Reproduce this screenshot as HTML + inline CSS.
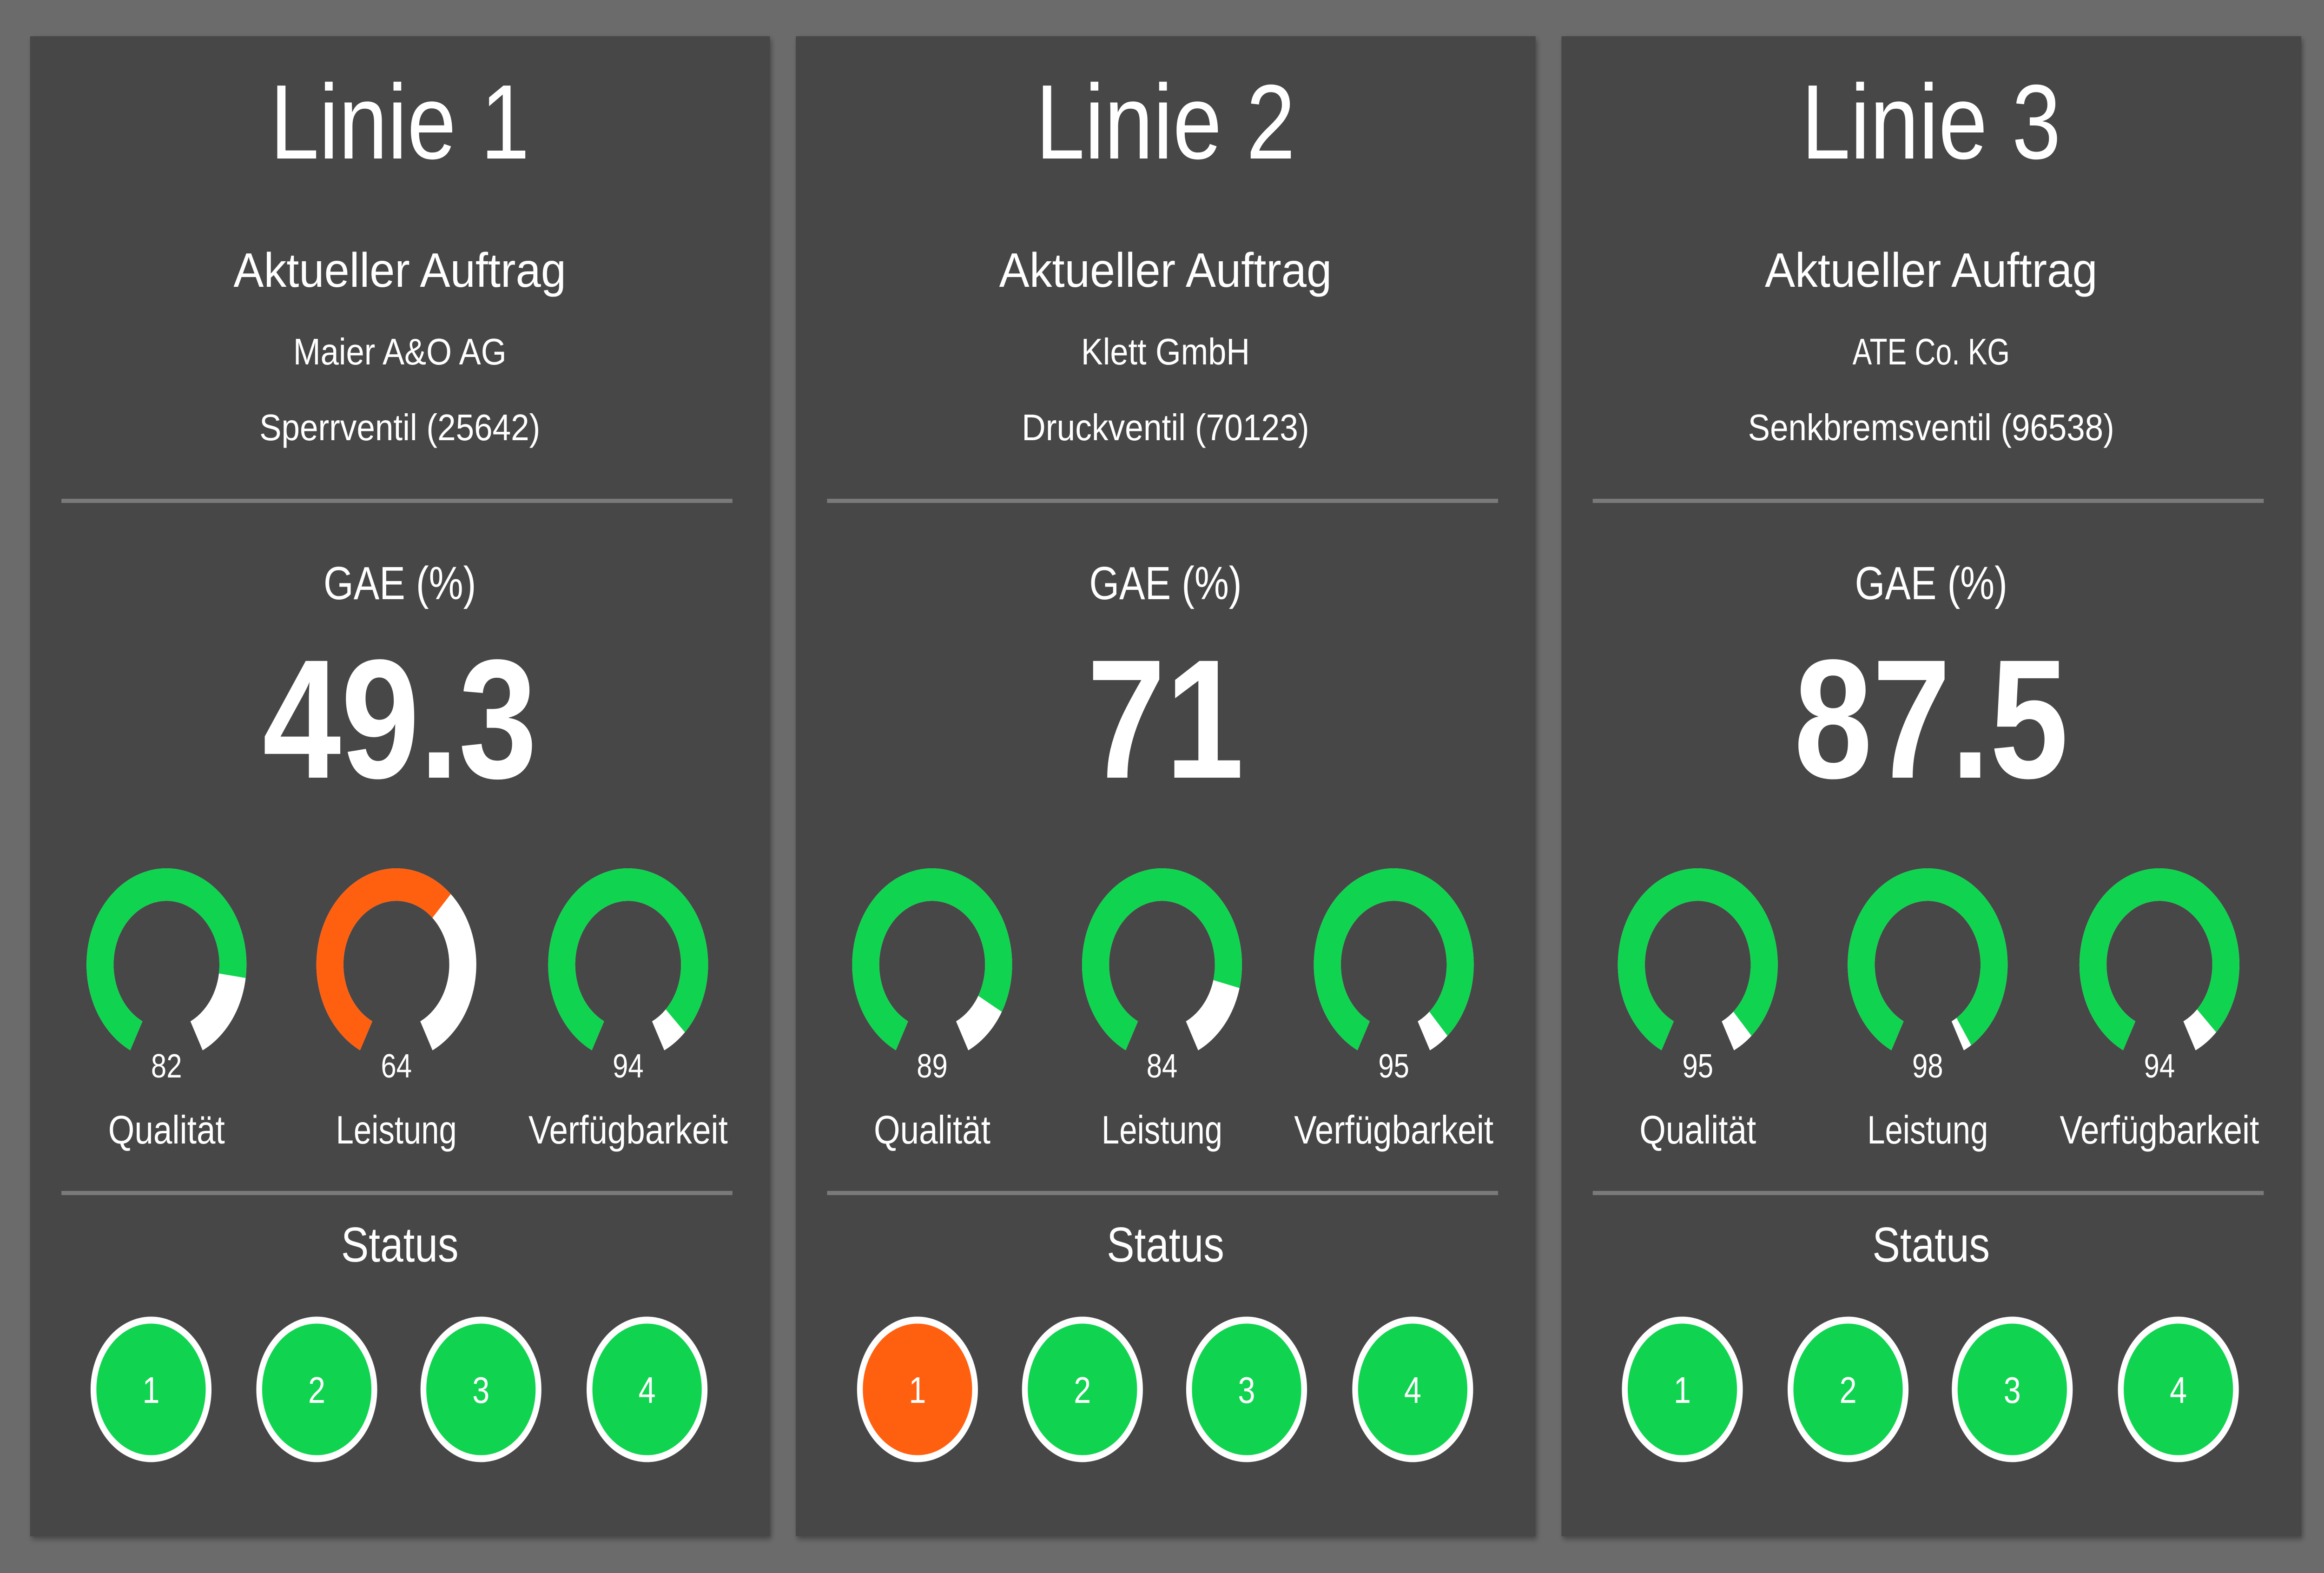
<!DOCTYPE html>
<html><head><meta charset="utf-8"><style>
html,body{margin:0;padding:0;background:#6b6b6b;width:100%;height:100%;overflow:hidden;}
svg{display:block;width:100vw;height:100vh}
text{fill:#fff;font-family:"Liberation Sans",sans-serif;text-anchor:middle}
.b{font-weight:bold}
</style></head><body>
<svg viewBox="0 0 6016 3384" preserveAspectRatio="none" xmlns="http://www.w3.org/2000/svg">
<defs>
<filter id="sh" x="-5%" y="-5%" width="110%" height="110%"><feDropShadow dx="4" dy="6" stdDeviation="6" flood-color="#000" flood-opacity="0.35"/></filter>
</defs>
<rect width="6016" height="3384" fill="#6b6b6b"/>

<!-- Panel 1 -->
<g transform="translate(78,0)">
<rect x="0" y="78" width="1915" height="3227" fill="#474747" filter="url(#sh)"/>
<text x="957" y="341" font-size="228">Linie 1</text>
<text x="957" y="617" font-size="104" textLength="861" lengthAdjust="spacingAndGlyphs">Aktueller Auftrag</text>
<text x="957" y="784" font-size="80" textLength="552" lengthAdjust="spacingAndGlyphs">Maier A&amp;O AG</text>
<text x="957" y="947" font-size="80" textLength="727" lengthAdjust="spacingAndGlyphs">Sperrventil (25642)</text>
<rect x="81" y="1073" width="1737" height="9" fill="#7a7a7a"/>
<text x="957" y="1289" font-size="100" textLength="395" lengthAdjust="spacingAndGlyphs">GAE (%)</text>
<text x="957" y="1673" font-size="365" class="b">49.3</text>
<g fill="none" stroke-width="70">
<circle cx="353" cy="2075" r="172" stroke="#fff" stroke-dasharray="918.6 2000" transform="rotate(117 353 2075)"/>
<circle cx="353" cy="2075" r="172" stroke="#10d450" stroke-dasharray="753.3 2000" transform="rotate(117 353 2075)"/>
<circle cx="948" cy="2075" r="172" stroke="#fff" stroke-dasharray="918.6 2000" transform="rotate(117 948 2075)"/>
<circle cx="948" cy="2075" r="172" stroke="#ff6010" stroke-dasharray="587.9 2000" transform="rotate(117 948 2075)"/>
<circle cx="1548" cy="2075" r="172" stroke="#fff" stroke-dasharray="918.6 2000" transform="rotate(117 1548 2075)"/>
<circle cx="1548" cy="2075" r="172" stroke="#10d450" stroke-dasharray="863.5 2000" transform="rotate(117 1548 2075)"/>
</g>
<text x="353" y="2318" font-size="72">82</text>
<text x="948" y="2318" font-size="72">64</text>
<text x="1548" y="2318" font-size="72">94</text>
<text x="353" y="2460" font-size="85" textLength="302" lengthAdjust="spacingAndGlyphs">Qualität</text>
<text x="948" y="2460" font-size="85" textLength="313" lengthAdjust="spacingAndGlyphs">Leistung</text>
<text x="1548" y="2460" font-size="85" textLength="516" lengthAdjust="spacingAndGlyphs">Verfügbarkeit</text>
<rect x="81" y="2562" width="1737" height="9" fill="#7a7a7a"/>
<text x="957" y="2714" font-size="106" textLength="304" lengthAdjust="spacingAndGlyphs">Status</text>
<g stroke="#fff" stroke-width="15">
<circle cx="313" cy="2989" r="149" fill="#10d450"/>
<circle cx="742" cy="2989" r="149" fill="#10d450"/>
<circle cx="1167" cy="2989" r="149" fill="#10d450"/>
<circle cx="1597" cy="2989" r="149" fill="#10d450"/>
</g>
<text x="313" y="3018" font-size="80">1</text>
<text x="742" y="3018" font-size="80">2</text>
<text x="1167" y="3018" font-size="80">3</text>
<text x="1597" y="3018" font-size="80">4</text>
</g>

<!-- Panel 2 -->
<g transform="translate(2060,0)">
<rect x="0" y="78" width="1915" height="3227" fill="#474747" filter="url(#sh)"/>
<text x="957" y="341" font-size="228">Linie 2</text>
<text x="957" y="617" font-size="104" textLength="861" lengthAdjust="spacingAndGlyphs">Aktueller Auftrag</text>
<text x="957" y="784" font-size="80" textLength="437" lengthAdjust="spacingAndGlyphs">Klett GmbH</text>
<text x="957" y="947" font-size="80" textLength="744" lengthAdjust="spacingAndGlyphs">Druckventil (70123)</text>
<rect x="81" y="1073" width="1737" height="9" fill="#7a7a7a"/>
<text x="957" y="1289" font-size="100" textLength="395" lengthAdjust="spacingAndGlyphs">GAE (%)</text>
<text x="957" y="1673" font-size="365" class="b">71</text>
<g fill="none" stroke-width="70">
<circle cx="353" cy="2075" r="172" stroke="#fff" stroke-dasharray="918.6 2000" transform="rotate(117 353 2075)"/>
<circle cx="353" cy="2075" r="172" stroke="#10d450" stroke-dasharray="817.6 2000" transform="rotate(117 353 2075)"/>
<circle cx="948" cy="2075" r="172" stroke="#fff" stroke-dasharray="918.6 2000" transform="rotate(117 948 2075)"/>
<circle cx="948" cy="2075" r="172" stroke="#10d450" stroke-dasharray="771.6 2000" transform="rotate(117 948 2075)"/>
<circle cx="1548" cy="2075" r="172" stroke="#fff" stroke-dasharray="918.6 2000" transform="rotate(117 1548 2075)"/>
<circle cx="1548" cy="2075" r="172" stroke="#10d450" stroke-dasharray="872.7 2000" transform="rotate(117 1548 2075)"/>
</g>
<text x="353" y="2318" font-size="72">89</text>
<text x="948" y="2318" font-size="72">84</text>
<text x="1548" y="2318" font-size="72">95</text>
<text x="353" y="2460" font-size="85" textLength="302" lengthAdjust="spacingAndGlyphs">Qualität</text>
<text x="948" y="2460" font-size="85" textLength="313" lengthAdjust="spacingAndGlyphs">Leistung</text>
<text x="1548" y="2460" font-size="85" textLength="516" lengthAdjust="spacingAndGlyphs">Verfügbarkeit</text>
<rect x="81" y="2562" width="1737" height="9" fill="#7a7a7a"/>
<text x="957" y="2714" font-size="106" textLength="304" lengthAdjust="spacingAndGlyphs">Status</text>
<g stroke="#fff" stroke-width="15">
<circle cx="315" cy="2989" r="149" fill="#ff6010"/>
<circle cx="742" cy="2989" r="149" fill="#10d450"/>
<circle cx="1167" cy="2989" r="149" fill="#10d450"/>
<circle cx="1597" cy="2989" r="149" fill="#10d450"/>
</g>
<text x="315" y="3018" font-size="80">1</text>
<text x="742" y="3018" font-size="80">2</text>
<text x="1167" y="3018" font-size="80">3</text>
<text x="1597" y="3018" font-size="80">4</text>
</g>

<!-- Panel 3 -->
<g transform="translate(4042,0)">
<rect x="0" y="78" width="1915" height="3227" fill="#474747" filter="url(#sh)"/>
<text x="957" y="341" font-size="228">Linie 3</text>
<text x="957" y="617" font-size="104" textLength="861" lengthAdjust="spacingAndGlyphs">Aktueller Auftrag</text>
<text x="957" y="784" font-size="80" textLength="407" lengthAdjust="spacingAndGlyphs">ATE Co. KG</text>
<text x="957" y="947" font-size="80" textLength="948" lengthAdjust="spacingAndGlyphs">Senkbremsventil (96538)</text>
<rect x="81" y="1073" width="1737" height="9" fill="#7a7a7a"/>
<text x="957" y="1289" font-size="100" textLength="395" lengthAdjust="spacingAndGlyphs">GAE (%)</text>
<text x="957" y="1673" font-size="365" class="b">87.5</text>
<g fill="none" stroke-width="70">
<circle cx="353" cy="2075" r="172" stroke="#fff" stroke-dasharray="918.6 2000" transform="rotate(117 353 2075)"/>
<circle cx="353" cy="2075" r="172" stroke="#10d450" stroke-dasharray="872.7 2000" transform="rotate(117 353 2075)"/>
<circle cx="948" cy="2075" r="172" stroke="#fff" stroke-dasharray="918.6 2000" transform="rotate(117 948 2075)"/>
<circle cx="948" cy="2075" r="172" stroke="#10d450" stroke-dasharray="900.2 2000" transform="rotate(117 948 2075)"/>
<circle cx="1548" cy="2075" r="172" stroke="#fff" stroke-dasharray="918.6 2000" transform="rotate(117 1548 2075)"/>
<circle cx="1548" cy="2075" r="172" stroke="#10d450" stroke-dasharray="863.5 2000" transform="rotate(117 1548 2075)"/>
</g>
<text x="353" y="2318" font-size="72">95</text>
<text x="948" y="2318" font-size="72">98</text>
<text x="1548" y="2318" font-size="72">94</text>
<text x="353" y="2460" font-size="85" textLength="302" lengthAdjust="spacingAndGlyphs">Qualität</text>
<text x="948" y="2460" font-size="85" textLength="313" lengthAdjust="spacingAndGlyphs">Leistung</text>
<text x="1548" y="2460" font-size="85" textLength="516" lengthAdjust="spacingAndGlyphs">Verfügbarkeit</text>
<rect x="81" y="2562" width="1737" height="9" fill="#7a7a7a"/>
<text x="957" y="2714" font-size="106" textLength="304" lengthAdjust="spacingAndGlyphs">Status</text>
<g stroke="#fff" stroke-width="15">
<circle cx="313" cy="2989" r="149" fill="#10d450"/>
<circle cx="742" cy="2989" r="149" fill="#10d450"/>
<circle cx="1167" cy="2989" r="149" fill="#10d450"/>
<circle cx="1597" cy="2989" r="149" fill="#10d450"/>
</g>
<text x="313" y="3018" font-size="80">1</text>
<text x="742" y="3018" font-size="80">2</text>
<text x="1167" y="3018" font-size="80">3</text>
<text x="1597" y="3018" font-size="80">4</text>
</g>
</svg>
</body></html>
